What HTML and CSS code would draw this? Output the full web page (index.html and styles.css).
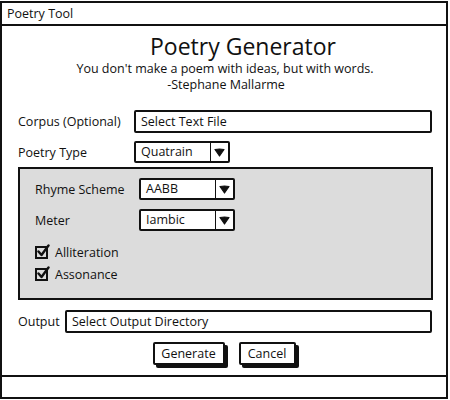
FILE: index.html
```html
<!DOCTYPE html>
<html>
<head>
<meta charset="utf-8">
<link rel="stylesheet" href="styles.css">
</head>
<body>
<div class="window">
  <div class="titlebar">Poetry Tool</div>
  <div class="content">
    <div class="heading">
      <div class="title">Poetry Generator</div>
      <div class="quote">You don't make a poem with ideas, but with words.</div>
      <div class="author">-Stephane Mallarme</div>
    </div>
    <div class="row corpus-row">
      <span class="label label-wide">Corpus (Optional)</span>
      <div class="input grow">Select Text File</div>
    </div>
    <div class="row type-row">
      <span class="label label-wide">Poetry Type</span>
      <div class="select"><span class="sel-text">Quatrain</span><span class="sel-btn"><svg width="11" height="9" viewBox="0 0 11 9"><path d="M1 1.5 Q5.5 0.5 10 1.5 L5.5 8 Z" fill="#111" stroke="#111" stroke-width="1.2" stroke-linejoin="round"/></svg></span></div>
    </div>
    <div class="panel">
      <div class="row prow">
        <span class="label label-panel">Rhyme Scheme</span>
        <div class="select"><span class="sel-text">AABB</span><span class="sel-btn"><svg width="11" height="9" viewBox="0 0 11 9"><path d="M1 1.5 Q5.5 0.5 10 1.5 L5.5 8 Z" fill="#111" stroke="#111" stroke-width="1.2" stroke-linejoin="round"/></svg></span></div>
      </div>
      <div class="row prow">
        <span class="label label-panel">Meter</span>
        <div class="select"><span class="sel-text">Iambic</span><span class="sel-btn"><svg width="11" height="9" viewBox="0 0 11 9"><path d="M1 1.5 Q5.5 0.5 10 1.5 L5.5 8 Z" fill="#111" stroke="#111" stroke-width="1.2" stroke-linejoin="round"/></svg></span></div>
      </div>
      <div class="checks">
        <div class="check"><svg class="cb" width="15" height="15" viewBox="0 0 15 15"><rect x="1" y="3" width="11" height="11" fill="none" stroke="#111" stroke-width="2"/><path d="M3.5 7.5 L6.5 11 L13.5 1.5" fill="none" stroke="#111" stroke-width="2.4" stroke-linecap="round" stroke-linejoin="round"/></svg><span>Alliteration</span></div>
        <div class="check"><svg class="cb" width="15" height="15" viewBox="0 0 15 15"><rect x="1" y="3" width="11" height="11" fill="none" stroke="#111" stroke-width="2"/><path d="M3.5 7.5 L6.5 11 L13.5 1.5" fill="none" stroke="#111" stroke-width="2.4" stroke-linecap="round" stroke-linejoin="round"/></svg><span>Assonance</span></div>
      </div>
    </div>
    <div class="row output-row">
      <span class="label label-out">Output</span>
      <div class="input grow">Select Output Directory</div>
    </div>
    <div class="buttons">
      <div class="btn btn-gen">Generate</div>
      <div class="btn btn-cancel">Cancel</div>
    </div>
  </div>
  <div class="statusbar"></div>
</div>
</body>
</html>
```
FILE: styles.css
```css
* { box-sizing: border-box; }
html, body { margin: 0; padding: 0; background: #fff; }
body {
  font-family: "Open Sans", "DejaVu Sans", sans-serif;
  font-size: 12.5px;
  color: #111;
  width: 450px;
  height: 400px;
  overflow: hidden;
}
.window {
  margin-top: 1px;
  width: 448px;
  height: 398px;
  border: 2px solid #111;
  display: flex;
  flex-direction: column;
}
.titlebar {
  height: 23px;
  border-bottom: 2px solid #111;
  padding-left: 5px;
  line-height: 21px;
  font-size: 12.5px;
}
.content {
  flex: 1;
  padding: 0 14px 0 16px;
}
.heading {
  text-align: center;
  padding-top: 6px;
  height: 84px;
}
.title {
  font-size: 23px;
  line-height: 29px;
  padding-left: 36px;
}
.quote, .author {
  line-height: 16px;
}
.author { padding-left: 2px; }
.row {
  display: flex;
  align-items: center;
}
.corpus-row { height: 23px; }
.type-row { margin-top: 8px; height: 22px; }
.label-wide { width: 116px; }
.grow { flex: 1; }
.input {
  height: 23px;
  border: 2px solid #111;
  border-radius: 2px;
  background: #fff;
  padding-left: 5px;
  line-height: 19px;
}
.select {
  width: 96px;
  height: 22px;
  border: 2px solid #111;
  border-radius: 2px;
  background: #fff;
  display: flex;
}
.sel-text {
  flex: 1;
  padding-left: 5px;
  line-height: 17px;
  border-right: 1.5px solid #111;
}
.sel-btn {
  width: 17px;
  display: flex;
  align-items: center;
  justify-content: center;
}
.panel {
  margin-top: 4px;
  height: 133px;
  margin-right: -1px;
  border: 2px solid #111;
  background: #dcdcdc;
  padding: 9px 0 0 15px;
}
.prow { height: 22px; }
.prow + .prow { margin-top: 9px; }
.label-panel { width: 104px; }
.checks { margin-top: 10px; }
.check {
  display: flex;
  align-items: center;
  height: 22px;
}
.cb { margin-right: 5px; margin-top: -2px; }
.output-row { margin-top: 10px; height: 23px; }
.label-out { width: 47px; }
.buttons {
  display: flex;
  justify-content: center;
  gap: 14px;
  margin-top: 9px;
  padding-right: 2px;
}
.btn {
  height: 23px;
  border: 2px solid #111;
  border-radius: 2px;
  background: #fff;
  box-shadow: 3px 3px 0 #111;
  line-height: 19px;
  text-align: center;
}
.btn-gen { width: 72px; }
.btn-cancel { width: 57px; }
.statusbar {
  height: 22px;
  border-top: 2px solid #111;
}
```
